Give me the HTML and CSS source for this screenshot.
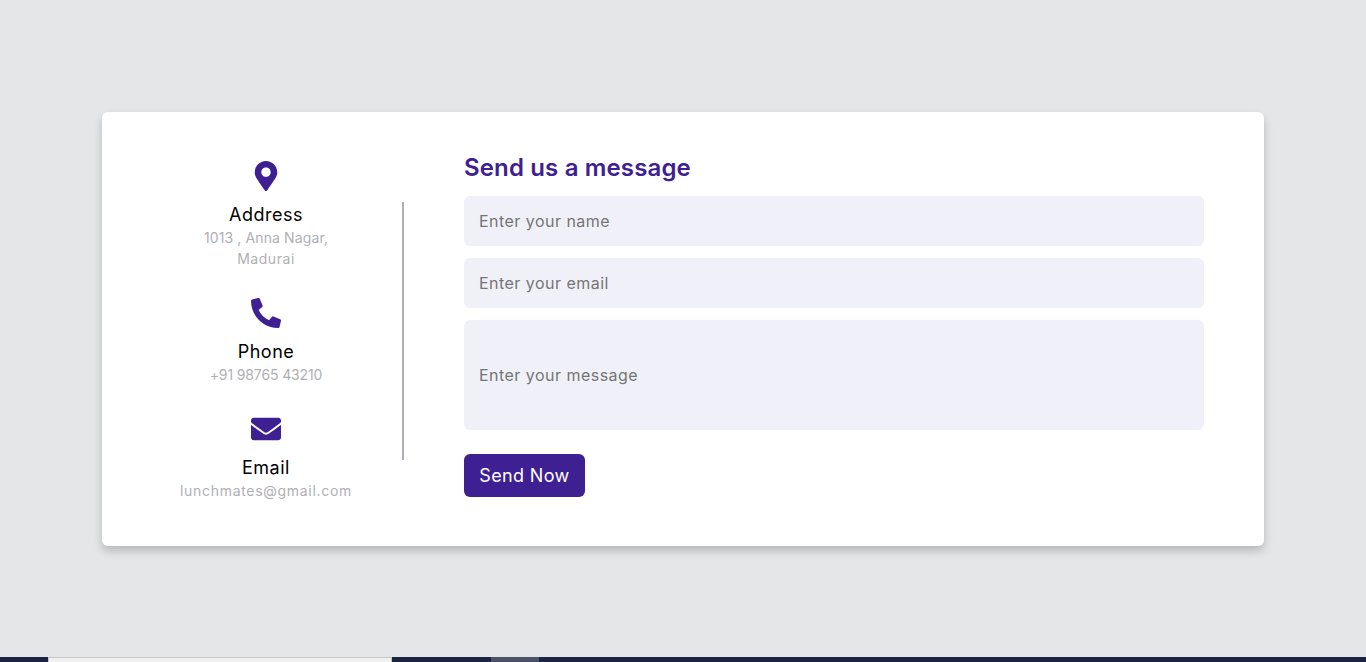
FILE: index.html
```html
<!DOCTYPE html>
<html lang="en">
<head>
<meta charset="utf-8">
<title>Contact</title>
<link rel="stylesheet" href="styles.css">
</head>
<body>
<main class="page">
  <section class="card">
    <div class="details">
      <div class="item">
        <svg class="icon" viewBox="0 0 512 512"><path d="M236.268 501.67C90.97 291.031 64 263.413 64 192 64 85.961 149.961 0 256 0s192 85.961 192 192c0 71.413-26.97 99.031-172.268 309.67-9.535 13.774-29.93 13.773-39.464 0zM256 272c44.183 0 80-35.817 80-80s-35.817-80-80-80-80 35.817-80 80 35.817 80 80 80z"/></svg>
        <div class="topic">Address</div>
        <div class="text text-street">1013 , Anna Nagar,</div>
        <div class="text text-city">Madurai</div>
      </div>
      <div class="item">
        <svg class="icon" viewBox="0 0 512 512"><path d="M497.39 361.8l-112-48a24 24 0 0 0-28 6.9l-49.6 60.6A370.66 370.66 0 0 1 130.6 204.11l60.6-49.6a23.94 23.94 0 0 0 6.9-28l-48-112A24.16 24.16 0 0 0 122.6.61l-104 24A24 24 0 0 0 0 48c0 256.5 207.9 464 464 464a24 24 0 0 0 23.4-18.6l24-104a24.29 24.29 0 0 0-14.01-27.6z"/></svg>
        <div class="topic">Phone</div>
        <div class="text text-phone">+91 98765 43210</div>
      </div>
      <div class="item">
        <svg class="icon" viewBox="0 0 512 512"><path d="M502.3 190.8c3.9-3.1 9.7-.2 9.7 4.7V400c0 26.5-21.5 48-48 48H48c-26.5 0-48-21.5-48-48V195.6c0-5 5.7-7.8 9.7-4.7 22.4 17.4 52.1 39.5 154.1 113.6 21.1 15.4 56.7 47.8 92.2 47.6 35.7.3 72-32.8 92.3-47.6 102-74.1 131.6-96.3 154-113.7zM256 320c23.2.4 56.6-29.2 73.4-41.4 132.7-96.3 142.8-104.7 173.4-128.7 5.8-4.5 9.2-11.5 9.2-18.9v-19c0-26.5-21.5-48-48-48H48C21.5 64 0 85.5 0 112v19c0 7.4 3.4 14.3 9.2 18.9 30.6 23.9 40.7 32.4 173.4 128.7 16.8 12.2 50.2 41.8 73.4 41.4z"/></svg>
        <div class="topic">Email</div>
        <div class="text text-mail">lunchmates@gmail.com</div>
      </div>
    </div>
    <div class="divider"></div>
    <form class="form">
      <h2 class="heading">Send us a message</h2>
      <input class="field" type="text" placeholder="Enter your name">
      <input class="field" type="text" placeholder="Enter your email">
      <input class="field field-tall" type="text" placeholder="Enter your message">
      <button class="send" type="button">Send Now</button>
    </form>
  </section>
</main>
<footer class="taskbar">
  <div class="seg seg-a"></div>
  <div class="seg seg-tab"></div>
  <div class="seg seg-b"></div>
  <div class="seg seg-light"></div>
</footer>
</body>
</html>
```
FILE: styles.css
```css
* { box-sizing: border-box; }
html, body { margin: 0; height: 100%; }
body {
  display: flex;
  flex-direction: column;
  background: #e5e6e8;
  font-family: Inter, "Open Sans", sans-serif;
  overflow: hidden;
}
.page {
  flex: 1;
  padding: 112px 102px 0;
}
.card {
  display: flex;
  width: 1162px;
  height: 434px;
  padding: 40px 60px 0 26px;
  background: #fff;
  border-radius: 6px;
  box-shadow: 0 5px 10px rgba(0, 0, 0, .2);
}
.details {
  width: 276px;
  margin-right: -2px;
  padding-top: 9px;
  display: flex;
  flex-direction: column;
  gap: 29px;
  align-items: center;
}
.item {
  display: flex;
  flex-direction: column;
  align-items: center;
}
.icon {
  display: block;
  width: 30px;
  height: 30px;
  fill: #3e2093;
  margin-bottom: 11px;
}
.topic {
  font-size: 18px;
  line-height: 25px;
  font-weight: 400;
  letter-spacing: .5px;
  color: #000;
}
.text {
  font-size: 14px;
  line-height: 21px;
  color: #afafb6;
}
.text-street { letter-spacing: .12px; }
.text-city { letter-spacing: .55px; }
.text-phone { letter-spacing: -.13px; }
.text-mail { letter-spacing: .7px; }
.divider {
  width: 2px;
  height: 258px;
  margin-top: 50px;
  background: #afafb6;
}
.form {
  flex: 1;
  margin-left: 60px;
  display: flex;
  flex-direction: column;
  align-items: flex-start;
}
.heading {
  margin: 0 0 12px;
  font-size: 24px;
  line-height: 32px;
  font-weight: 600;
  letter-spacing: .15px;
  color: #3e2093;
}
.field {
  display: block;
  width: 100%;
  height: 50px;
  margin-bottom: 12px;
  padding: 0 15px;
  border: 0;
  border-radius: 6px;
  background: #f0f1f8;
  font: 16px Inter, "Open Sans", sans-serif;
  letter-spacing: .47px;
}
.field::placeholder { color: #757575; opacity: 1; }
.field-tall { height: 110px; }
.send {
  width: 121px;
  height: 43px;
  margin-top: 12px;
  border: 0;
  border-radius: 6px;
  background: #3e2093;
  color: #fff;
  font: 400 18px Inter, "Open Sans", sans-serif;
  letter-spacing: .35px;
}
.taskbar {
  display: flex;
  height: 5px;
  background: #1a2542;
}
.seg-a { width: 48px; }
.seg-tab {
  width: 344px;
  background: #f1f1f1;
  border: 1px solid #c6c6c6;
  border-bottom: 0;
}
.seg-b { width: 99px; }
.seg-light { width: 48px; background: #4a5368; }
```
